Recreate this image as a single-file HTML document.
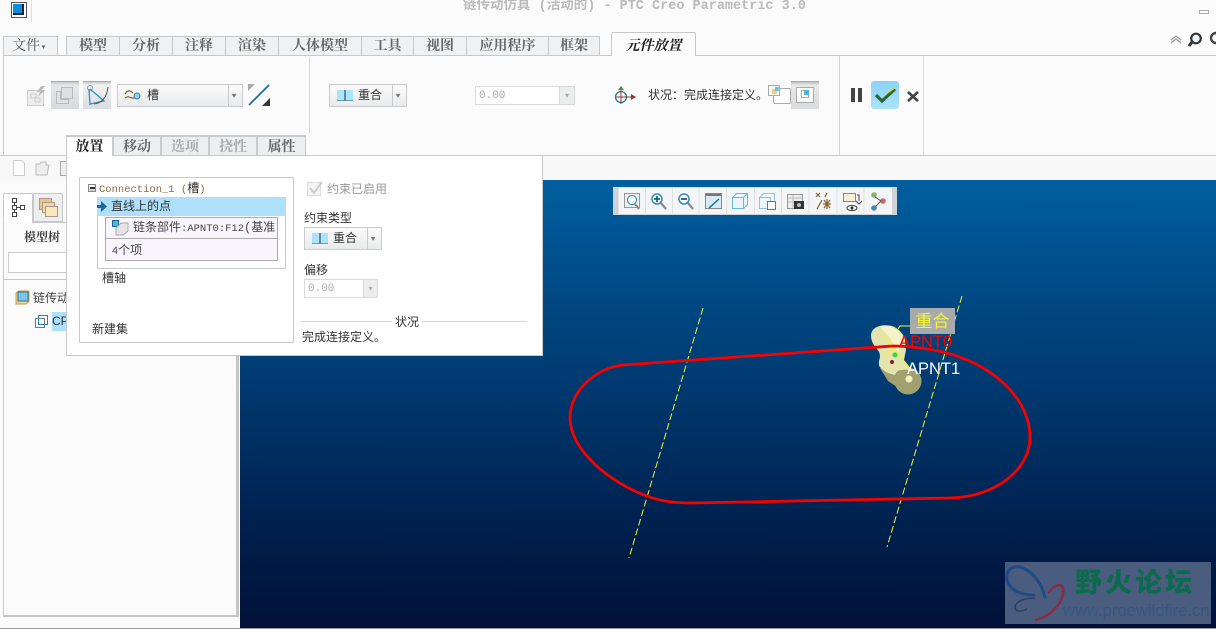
<!DOCTYPE html>
<html><head><meta charset="utf-8">
<style>
html,body{margin:0;padding:0}
body{width:1216px;height:629px;position:relative;overflow:hidden;background:#fbfbfb;font-family:"Liberation Sans","WenQuanYi Zen Hei","Noto Sans CJK SC",sans-serif;font-size:12px;color:#333}
.a{position:absolute;box-sizing:border-box;white-space:nowrap}
.tab{position:absolute;top:36px;height:20px;background:#eff1f3;border:1px solid #c6c8ca;border-bottom:0;border-left:0;text-align:center;font:bold 14px/17px "Noto Serif CJK SC",serif;color:#666;box-sizing:border-box}
.st{position:absolute;top:135px;height:21px;background:#eceef0;border:2px solid #c8cacc;border-bottom:0;border-left:0;text-align:center;font:bold 14px/18px "Noto Serif CJK SC",serif;color:#666;box-sizing:border-box}
.btn{position:absolute;background:linear-gradient(#fbfbfb,#e9eaeb);border:1px solid #c9cbcd;box-sizing:border-box}
svg{position:absolute;overflow:visible}
.t{position:absolute;white-space:nowrap}
</style></head><body>

<!-- title bar -->
<div class="a" style="left:11px;top:2px;width:16px;height:16px;border:1px solid #555;background:#fff"></div>
<div class="a" style="left:13px;top:4px;width:11px;height:11px;background:#0a8fdc;border-right:2px solid #223;border-bottom:2px solid #223"></div>
<div class="a" style="left:31px;top:0;width:1px;height:22px;background:#ddd"></div>
<div class="t" style="left:463px;top:0;font:bold 13.5px/13px 'Liberation Mono','Noto Sans CJK SC',monospace;color:#bbb">链传动仿真 (活动的) - PTC Creo Parametric 3.0</div>
<div class="a" style="left:1199px;top:10px;width:10px;height:4px;border:1px solid #aaa"></div>

<!-- tabs -->
<div class="a" style="left:3px;top:36px;width:55px;height:20px;border:1px solid #c6c8ca;background:#f2f3f4;font:14px/17px 'Noto Serif CJK SC',serif;color:#555;padding-left:8px">文件<span style="font-size:7px;vertical-align:1px"> ▾</span></div>
<div class="tab" style="left:66px;width:54px;border-left:1px solid #c6c8ca">模型</div>
<div class="tab" style="left:120px;width:53px">分析</div>
<div class="tab" style="left:173px;width:53px">注释</div>
<div class="tab" style="left:226px;width:53px">渲染</div>
<div class="tab" style="left:279px;width:83px">人体模型</div>
<div class="tab" style="left:362px;width:52px">工具</div>
<div class="tab" style="left:414px;width:53px">视图</div>
<div class="tab" style="left:467px;width:82px">应用程序</div>
<div class="tab" style="left:549px;width:51px">框架</div>
<div class="a" style="left:611px;top:32px;width:85px;height:24px;background:#fcfcfc;border:1px solid #c6c8ca;border-bottom:0;border-radius:2px 2px 0 0;text-align:center;font:italic bold 14px/24px 'Noto Serif CJK SC',serif;color:#222;z-index:2">元件放置</div>
<div class="a" style="left:3px;top:55px;width:1213px;height:1px;background:#c6c8ca"></div>
<svg style="left:1170px;top:32px" width="46" height="16" fill="none">
<path d="M1 8l5-4 5 4M1 11l5-4 5 4" stroke="#999" stroke-width="1.2"/>
<circle cx="26" cy="6.5" r="4.8" stroke="#333" stroke-width="2.2" fill="#eaf6fb"/><path d="M22 10l-3 4" stroke="#333" stroke-width="3"/>
<circle cx="46" cy="6" r="5" stroke="#444" stroke-width="2.4"/></svg>

<!-- ribbon -->
<div class="a" style="left:3px;top:56px;width:1px;height:100px;background:#c6c8ca"></div>
<div class="a" style="left:0;top:155px;width:1216px;height:1px;background:#c8cacc"></div>
<div class="a" style="left:309px;top:58px;width:1px;height:75px;background:#d4d4d4"></div>
<div class="a" style="left:839px;top:56px;width:1px;height:99px;background:#d4d4d4"></div>
<div class="a" style="left:923px;top:56px;width:1px;height:99px;background:#dcdcdc"></div>

<svg style="left:27px;top:85px" width="20" height="22" fill="none"><rect x="0.5" y="5.5" width="16" height="15" fill="#eee" stroke="#ccc"/><path d="M4 9h5v4H4zM8 13h5v4H8z" stroke="#ccc"/><path d="M14 1l-4 6h3l-2 5 7-7h-3l3-4z" fill="#bbb"/></svg>
<div class="a" style="left:51px;top:81px;width:28px;height:28px;background:linear-gradient(#c9cacb,#e6e7e8 12%,#d9dadb);border-top:1px solid #aaa"></div>
<svg style="left:56px;top:87px" width="18" height="17" fill="#dfe0e1" stroke="#bbb"><rect x="5.5" y="0.5" width="11" height="11"/><path d="M.5 4.5h4v8h8v4H.5z"/></svg>
<div class="a" style="left:83px;top:81px;width:28px;height:28px;background:linear-gradient(#c9cacb,#f0f1f2 12%,#dcdde0);border-top:1px solid #aaa"></div>
<svg style="left:86px;top:84px" width="24" height="22" fill="none"><circle cx="4" cy="4" r="2.5" stroke="#999"/><path d="M3 5l1 16M4 5l14 12-14 3" stroke="#2c9ac9" stroke-width="1.4"/><path d="M8 20c8-1 13-7 14-17" stroke="#555"/></svg>
<div class="btn" style="left:117px;top:84px;width:126px;height:23px"></div>
<div class="a" style="left:228px;top:85px;width:1px;height:21px;background:#c9cbcd"></div>
<div class="t" style="left:232px;top:91px;font-size:8px;color:#777;transform:scaleX(1.2)">▾</div>
<svg style="left:124px;top:88px" width="18" height="14" fill="none"><path d="M1 6c3-5 6-3 8-1M1 10c4-3 6 1 9 0" stroke="#8a6a2c" stroke-width="1.3"/><circle cx="13" cy="8" r="3" fill="#8fd2ef" stroke="#3a7ca0"/></svg>
<div class="t" style="left:147px;top:87px;font-size:12px;line-height:16px">槽</div>
<svg style="left:248px;top:84px" width="23" height="22" fill="none"><path d="M1 21L21 1" stroke="#1d6a94" stroke-width="1.8"/><path d="M0 0h7l-7 7z" fill="#aaa"/><path d="M22 22h-8l8-8z" fill="#333"/></svg>

<div class="btn" style="left:329px;top:84px;width:78px;height:23px"></div>
<div class="a" style="left:392px;top:85px;width:1px;height:21px;background:#c9cbcd"></div>
<div class="t" style="left:396px;top:91px;font-size:8px;color:#777;transform:scaleX(1.2)">▾</div>
<div class="a" style="left:337px;top:90px;width:16px;height:11px;background:#aee4fb;border-bottom:1px solid #69a;"></div>
<div class="a" style="left:344px;top:90px;width:2px;height:11px;background:#5c8ba0"></div>
<div class="t" style="left:358px;top:87px;font-size:12px;line-height:16px">重合</div>

<div class="a" style="left:475px;top:86px;width:100px;height:19px;border:1px solid #d8dadc;background:#fff;font:11px/19px 'Liberation Mono',monospace;color:#aaa;padding-left:3px">0.00</div>
<div class="a" style="left:559px;top:87px;width:15px;height:17px;background:#eceded;border-left:1px solid #d8dadc;text-align:center;font-size:8px;line-height:17px;color:#aaa">▾</div>

<svg style="left:612px;top:85px" width="24" height="22" fill="none"><circle cx="9" cy="12" r="5.5" stroke="#2a7a9a" stroke-width="1.3"/><path d="M9 3v16M3 12h18" stroke="#943a2a"/><path d="M6 5l3-4 3 4z" fill="#4d8a4d"/><path d="M19 9l5 3-5 3z" fill="#943a2a"/></svg>
<div class="t" style="left:648px;top:87px;font-size:12px;line-height:16px">状况：完成连接定义。</div>
<svg style="left:767px;top:84px" width="58" height="26" fill="none">
<rect x="6.5" y="4.5" width="17" height="15" rx="1" fill="#fff" stroke="#aaa"/><rect x="1.5" y="1.5" width="11" height="10" fill="#fff" stroke="#aaa"/><rect x="5" y="5" width="5" height="5" fill="#f0cb8a"/><rect x="8" y="3" width="4" height="4" fill="#6cc2e6"/></svg>
<div class="a" style="left:791px;top:81px;width:28px;height:28px;background:linear-gradient(#bfc0c1,#e8e9ea 12%,#dadbdd);border-top:1px solid #aaa"></div>
<div class="a" style="left:796px;top:87px;width:18px;height:16px;background:#fbfbfb;border:1px solid #aaa"></div>
<div class="a" style="left:801px;top:90px;width:8px;height:8px;border:1px solid #d6a94e;background:#fff"></div>
<div class="a" style="left:804px;top:90px;width:5px;height:5px;background:#4fb3dd"></div>

<div class="a" style="left:851px;top:88px;width:4px;height:14px;background:#444"></div>
<div class="a" style="left:858px;top:88px;width:4px;height:14px;background:#444"></div>
<div class="a" style="left:871px;top:81px;width:28px;height:28px;border-radius:3px;background:linear-gradient(#8bd2f8,#aee2fb)"></div>
<svg style="left:874px;top:87px" width="23" height="17" fill="none"><path d="M2 8l6 6L21 2" stroke="#2b6a2e" stroke-width="3.2"/><path d="M12 7l9-6" stroke="#e6e020" stroke-width="1"/></svg>
<svg style="left:907px;top:91px" width="12" height="11"><path d="M1 1l10 9M11 1L1 10" stroke="#444" stroke-width="2.6"/></svg>

<!-- secondary toolbar row -->
<div class="a" style="left:0;top:156px;width:1216px;height:24px;background:#f8f8f8"></div>
<svg style="left:12px;top:160px" width="60" height="17" fill="none"><path d="M1.500 .5h8l3 3v12h-11z" fill="#fff" stroke="#ccc"/><path d="M24 15V4h4l1-2h5v3h3l-2 10z" fill="#eee" stroke="#bbb"/><rect x="48.500" y="1.500" width="13" height="14" fill="#eee" stroke="#aaa"/></svg>

<!-- left panel -->
<div class="a" style="left:0;top:180px;width:240px;height:449px;background:#fbfbfb"></div>
<div class="a" style="left:3px;top:222px;width:236px;height:395px;border:1px solid #c6c8ca;border-right:3px solid #c4c6c8;border-bottom:2px solid #c4c6c8"></div>
<div class="a" style="left:3px;top:193px;width:30px;height:30px;background:#fff;border:1px solid #c6c8ca;border-bottom:0;border-radius:2px 2px 0 0"></div>
<div class="a" style="left:33px;top:193px;width:30px;height:29px;background:#eee;border:1px solid #c6c8ca"></div>
<svg style="left:12px;top:198px" width="14" height="19" fill="none" stroke="#444"><rect x=".5" y=".5" width="4" height="4"/><rect x=".5" y="7.500" width="4" height="4"/><rect x=".5" y="14.500" width="4" height="4"/><rect x="8.500" y="7.500" width="4" height="4"/><path d="M2.500 5v2M2.500 12v2M5 9.500h3"/></svg>
<svg style="left:39px;top:198px" width="20" height="20"><rect x=".5" y=".5" width="12" height="11" fill="#e8c88a" stroke="#a98"/><rect x="3.500" y="4.500" width="12" height="10" fill="#f2d9a3" stroke="#a98"/><rect x="6.500" y="8.500" width="12" height="10" fill="#f8e8c0" stroke="#a98"/></svg>
<div class="t" style="left:24px;top:229px;font:bold 12px/16px 'Noto Serif CJK SC',serif;color:#444">模型树</div>
<div class="a" style="left:8px;top:252px;width:60px;height:21px;background:#fff;border:1px solid #ccc"></div>
<div class="a" style="left:3px;top:279px;width:233px;height:1px;background:#c6c8ca"></div>
<svg style="left:15px;top:290px" width="16" height="15"><path d="M1 3l3-2h10v10l-3 3H1z" fill="#f2d18f" stroke="#c49a50"/><rect x="3" y="2" width="10" height="9" fill="#7cc6e8" stroke="#2a7a9a"/></svg>
<div class="t" style="left:33px;top:290px;font-size:12px;line-height:16px;color:#444">链传动</div>
<svg style="left:35px;top:315px" width="13" height="14" fill="none"><rect x=".5" y="3.500" width="9" height="9" stroke="#777"/><rect x="3.500" y=".5" width="9" height="9" stroke="#2a88b8"/></svg>
<div class="a" style="left:52px;top:312px;width:16px;height:19px;background:#aee0fb;font-size:12px;line-height:19px;color:#234;overflow:hidden">CP</div>

<!-- viewport -->
<div class="a" style="left:240px;top:180px;width:976px;height:449px;background:linear-gradient(#005f9f 0%,#004a85 25%,#003266 55%,#001a45 85%,#001138 100%)"></div>
<div class="a" style="left:0;top:628px;width:1216px;height:1px;background:#999"></div>

<!-- view toolbar -->
<div class="a" style="left:613px;top:187px;width:284px;height:28px;background:#f4f5f6;border-left:5px solid #cfd2d6;border-right:5px solid #cfd2d6;border-top:1px solid #dde;border-bottom:1px solid #cfd2d6"></div>
<svg style="left:613px;top:187px" width="284" height="28" fill="none">
<path d="M5.500 0v28M32.500 0v28M59.500 0v28M86 0v28M113.500 0v28M141.500 0v28M168.500 0v28M196 0v28M224 0v28M251 0v28" stroke="#dfe1e3" transform="translate(0 0)"/>
<rect x="11.500" y="6.500" width="15" height="14" fill="#f0f0f0" stroke="#999"/><circle cx="19" cy="13" r="4.500" stroke="#4a9ac4" stroke-width="1.300" fill="#fff"/><path d="M22 17l4 5" stroke="#888" stroke-width="2"/>
<circle cx="44" cy="12" r="5" stroke="#3a8ab4" stroke-width="1.500" fill="#fff"/><path d="M41 12h6M44 9v6" stroke="#14607f" stroke-width="1.800"/><path d="M48 16l5 6" stroke="#888" stroke-width="2.200"/>
<circle cx="71" cy="12" r="5" stroke="#3a8ab4" stroke-width="1.500" fill="#fff"/><path d="M68 12h6" stroke="#14607f" stroke-width="1.800"/><path d="M75 16l5 6" stroke="#888" stroke-width="2.200"/>
<rect x="92.500" y="6.500" width="16" height="15" fill="#d7ebf4" stroke="#888"/><path d="M93 7h15v2H93z" fill="#777"/><path d="M96 21l10-9" stroke="#1a6e96" stroke-width="1.500"/>
<path d="M119.500 10.500h11v11h-11zM119.500 10.500l4-4h11v11l-4 4M130.500 10.500l4-4" stroke="#6ab8d8" fill="#eaf6fb"/>
<path d="M146.500 10.500h11v11h-11zM146.500 10.500l4-4h11v7" stroke="#8cc6de" fill="#eef7fb"/><rect x="154.500" y="14.500" width="8" height="8" fill="#fff" stroke="#777"/>
<rect x="174.500" y="7.500" width="15" height="14" fill="#eee" stroke="#999"/><path d="M175 11h14M175 15h14M180 8v13" stroke="#bbb"/><rect x="181" y="14" width="10" height="8" fill="#333"/><circle cx="186" cy="18" r="2" fill="#bbb"/>
<path d="M203 6l4 4M207 6l-4 4M214 6l-2 4M204 22l5-9M214 12v10M210 17h8M211 13l6 8M217 13l-6 8" stroke="#84642a" stroke-width="1.200"/>
<rect x="230.500" y="6.500" width="12" height="8" fill="#f6efd7" stroke="#888"/><path d="M244 8h2v6M243 14l3 3 3-3" stroke="#444"/><ellipse cx="239" cy="21" rx="5" ry="2.500" fill="#fff" stroke="#333"/><circle cx="239" cy="21" r="1.500" fill="#222"/>
<circle cx="261" cy="8" r="2.800" fill="#88b46c"/><circle cx="270" cy="14" r="2.800" fill="#c86a6a"/><circle cx="261" cy="21" r="2.800" fill="#4d8ab0"/><path d="M262 10l6 4-6 6" stroke="#555"/>
</svg>

<!-- scene -->
<svg style="left:0;top:0" width="1216" height="629" fill="none">
<path d="M703 308L629 558" stroke="#f4f430" stroke-width="1" stroke-dasharray="7 3"/>
<path d="M962 296L887 547" stroke="#f4f430" stroke-width="1" stroke-dasharray="7 3"/>
<!-- part: dark side, then lit faces -->
<circle cx="908" cy="381" r="13.500" fill="#a0a070"/>
<path d="M880 368L888 381L900 389L914 372Z" fill="#a0a070"/>
<path d="M871 335c1-9 12-11 21-9 6 2 12 8 13 14l1 10-2 10 9 11c-3-1-7-2-11-1-4 0-6 2-7 5-5-1-11-3-15-8-2-2-1-6 0-10 0-4-1-6-4-9-2-3-5-6-5-13z" fill="#e4e4ae"/>
<path d="M879 326l11 0c7 3 12 8 14 14l-6 12-8-14z" fill="#f4f4c8"/>
<circle cx="909" cy="379" r="3.500" fill="#f0f0bc"/>
<path d="M881 333l30 37M885 356l8-8" stroke="#f4f430"/>
<path d="M623 365C600 367 570 388 570 418C570 450 610 483 647 496C660 501 675 503 690 503L950 498C995 497 1030 470 1030 437C1030 400 995 365 943 352C925 348 905 346 893 346Z" stroke="#f80000" stroke-width="2.800" stroke-linejoin="round"/>
<circle cx="895" cy="355" r="2.500" fill="#2ed84e"/><circle cx="892" cy="362" r="2" fill="#8a1a3a"/>
<path d="M898 329l2-3h10" stroke="#f4f430"/>
</svg>
<div class="a" style="left:910px;top:308px;width:45px;height:26px;background:#a8aaac;color:#f6f632;font-size:17px;line-height:27px;text-align:center">重合</div>
<div class="t" style="left:899px;top:333px;font-size:16.5px;line-height:18px;color:#f80000">APNT0</div>
<div class="t" style="left:907px;top:360px;font-size:16.5px;line-height:18px;color:#fff">APNT1</div>

<!-- placement panel -->
<div class="a" style="left:66px;top:155px;width:477px;height:201px;background:#fff;border:1px solid #c8cacc;border-top:0"></div>
<div class="st" style="left:66px;width:48px;background:#fff;color:#222;border-left:1px solid #c8cacc;height:21px;border-bottom:0;">放置</div>
<div class="st" style="left:114px;width:48px">移动</div>
<div class="st" style="left:162px;width:48px;color:#aaa">选项</div>
<div class="st" style="left:210px;width:48px;color:#aaa">挠性</div>
<div class="st" style="left:258px;width:48px;border-right-width:1px">属性</div>
<div class="a" style="left:114px;top:155px;width:429px;height:1px;background:#c8cacc"></div>

<div class="a" style="left:79px;top:177px;width:215px;height:166px;border:1px solid #c8cacc"></div>
<div class="a" style="left:88px;top:184px;width:8px;height:8px;border:1px solid #888;background:linear-gradient(#fff,#ccc)"></div>
<div class="a" style="left:89.500px;top:187px;width:5px;height:2px;background:#333"></div>
<div class="t" style="left:99px;top:181px;font:10.5px/16px 'Liberation Mono','Noto Sans CJK SC',monospace;color:#8a6a4a">Connection_1 (<span style="color:#333;font-size:12px">槽</span>)</div>
<div class="a" style="left:97px;top:197px;width:189px;height:19px;background:#aee0fb"></div>
<svg style="left:97px;top:201px" width="10" height="11"><path d="M0 4h4V0l6 5.500-6 5.500V7H0z" fill="#1a6a94"/></svg>
<div class="t" style="left:111px;top:198px;font-size:12px;line-height:17px">直线上的点</div>
<div class="a" style="left:97px;top:216px;width:189px;height:53px;border:1px solid #c8cacc;border-top:0"></div>
<div class="a" style="left:105px;top:217px;width:173px;height:22px;border:1px solid #aaa;background:#f8f6fc"></div>
<div class="a" style="left:105px;top:239px;width:173px;height:22px;border:1px solid #aaa;border-top:0;background:#f8f6fc"></div>
<svg style="left:112px;top:220px" width="17" height="16"><rect x=".5" y=".5" width="6" height="6" fill="#4fb3dd" stroke="#1a6a94"/><path d="M4 8l5-5h7v8l-5 4H4z" fill="#e4e4e4" stroke="#aaa"/></svg>
<div class="t" style="left:133px;top:220px;width:143px;overflow:hidden;font:12px/16px 'Liberation Mono','WenQuanYi Zen Hei',monospace;color:#444"><span>链条部件</span><span style="font-size:10.500px">:APNT0:F12</span>(基准点</div>
<div class="t" style="left:112px;top:242px;font-size:12px;line-height:16px;color:#444"><span style="color:#557;font-size:11px">4</span>个项</div>
<div class="t" style="left:102px;top:270px;font-size:12px;line-height:16px">槽轴</div>
<div class="t" style="left:92px;top:321px;font-size:12px;line-height:16px">新建集</div>

<div class="a" style="left:307px;top:182px;width:14px;height:14px;border:1px solid #ddd;background:#f4f4f4"></div>
<svg style="left:308px;top:181px" width="15" height="14"><path d="M2 7l4 5 8-11" stroke="#ccc" stroke-width="2" fill="none"/></svg>
<div class="t" style="left:327px;top:181px;font-size:12px;line-height:16px;color:#999">约束已启用</div>
<div class="t" style="left:304px;top:210px;font-size:12px;line-height:16px">约束类型</div>
<div class="btn" style="left:304px;top:227px;width:78px;height:23px"></div>
<div class="a" style="left:367px;top:228px;width:1px;height:21px;background:#c9cbcd"></div>
<div class="t" style="left:371px;top:234px;font-size:8px;color:#777;transform:scaleX(1.2)">▾</div>
<div class="a" style="left:312px;top:233px;width:16px;height:11px;background:#aee4fb;border-bottom:1px solid #69a"></div>
<div class="a" style="left:319px;top:233px;width:2px;height:11px;background:#5c8ba0"></div>
<div class="t" style="left:333px;top:230px;font-size:12px;line-height:16px">重合</div>
<div class="t" style="left:304px;top:262px;font-size:12px;line-height:16px">偏移</div>
<div class="a" style="left:304px;top:279px;width:74px;height:19px;border:1px solid #d8dadc;background:#fff;font:11px/19px 'Liberation Mono',monospace;color:#aaa;padding-left:3px">0.00</div>
<div class="a" style="left:363px;top:280px;width:14px;height:17px;background:#eceded;border-left:1px solid #d8dadc;text-align:center;font-size:8px;line-height:17px;color:#aaa">▾</div>
<div class="a" style="left:301px;top:321px;width:91px;height:1px;background:#d4d4d4"></div>
<div class="t" style="left:395px;top:314px;font-size:12px;line-height:16px">状况</div>
<div class="a" style="left:422px;top:321px;width:105px;height:1px;background:#d4d4d4"></div>
<div class="t" style="left:302px;top:329px;font-size:12px;line-height:16px">完成连接定义。</div>

<!-- watermark -->
<div class="a" style="left:1005px;top:562px;width:206px;height:62px;background:#4a5d7e"></div>
<svg style="left:1005px;top:562px" width="66" height="62" fill="none">
<path d="M40 36C36 16 20 3 10 5C0 7-1 20 8 27C14 32 22 33 30 33" stroke="#1f4a86" stroke-width="3"/>
<path d="M43 31C48 24 56 20 58 26C60 38 48 54 30 58" stroke="#8a2a45" stroke-width="2.500"/>
<path d="M30 36C20 36 11 39 10 45C10 50 16 50 22 47" stroke="#2a3e5e" stroke-width="1.500"/>
</svg>
<div class="t" style="left:1075px;top:565px;font:900 27px/32px 'Noto Sans CJK SC',sans-serif;color:#0c6a4e;letter-spacing:3px">野火论坛</div>
<div class="t" style="left:1063px;top:601px;font-size:16.6px;line-height:20px;color:#36577c">www.proewildfire.cn</div>
</body></html>
